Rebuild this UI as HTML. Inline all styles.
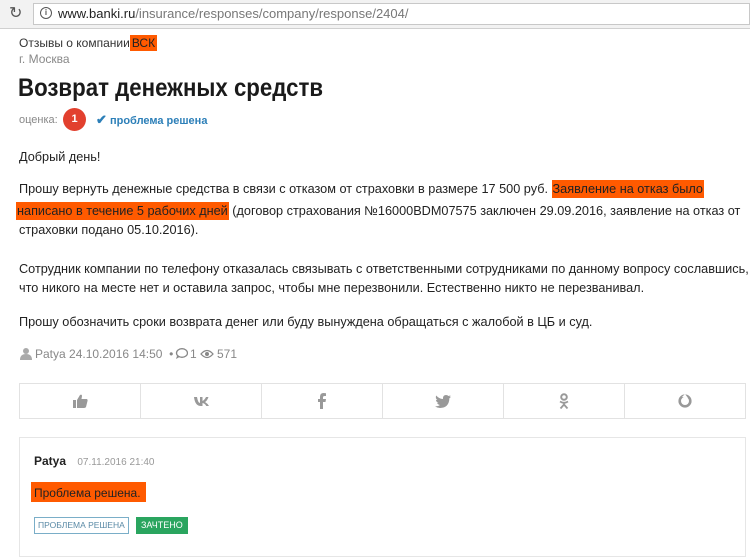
<!DOCTYPE html>
<html><head><meta charset="utf-8"><style>
*{margin:0;padding:0;box-sizing:border-box}
body{width:750px;height:549px;overflow:hidden;background:#fff;font-family:"Liberation Sans",sans-serif;color:#222;position:relative}
.a{position:absolute;white-space:nowrap}
.hl{background:#ff5a00;color:#222}
.t{font-size:12.7px;left:19px}
.c{flex:1;border-right:1px solid #e2e2e2;display:flex;align-items:center;justify-content:center}
</style></head><body>
<div class="a" style="left:0;top:0;width:750px;height:29px;background:#f2f2f2;border-bottom:1px solid #d0d0d0"></div>
<div class="a" style="left:9px;top:3px;font-size:16px;color:#555">&#x21bb;</div>
<div class="a" style="left:33px;top:3px;width:717px;height:22px;background:#fff;border:1px solid #c8c8c8"></div>
<div class="a" style="left:40px;top:7px;width:12px;height:12px;border:1.5px solid #555;border-radius:50%;font-size:8px;text-align:center;line-height:10px;color:#555;font-weight:bold">i</div>
<div class="a" style="left:58px;top:6px;font-size:13px;color:#222">www.banki.ru<span style="color:#777">/insurance/responses/company/response/2404/</span></div>

<div class="a" style="left:19px;top:36px;font-size:12px;color:#333">Отзывы о компании<span class="hl" style="padding:1px 2px">ВСК</span></div>
<div class="a" style="left:19px;top:52px;font-size:12px;color:#888">г. Москва</div>
<div class="a" style="left:18px;top:74px;font-size:25px;font-weight:bold;color:#1a1a1a;transform:scaleX(0.89);transform-origin:0 0">Возврат денежных средств</div>
<div class="a" style="left:19px;top:114px;font-size:11px;color:#888">оценка:</div>
<div class="a" style="left:63px;top:108px;width:23px;height:23px;border-radius:50%;background:#e2402e;color:#fff;font-size:11px;font-weight:bold;text-align:center;line-height:23px">1</div>
<div class="a" style="left:96px;top:112px;font-size:11px;font-weight:bold;color:#2c7fb8"><span style="font-size:13px">&#x2714;</span> проблема решена</div>

<div class="a t" style="top:150px">Добрый день!</div>
<div class="a t" style="top:182px">Прошу вернуть денежные средства в связи с отказом от страховки в размере 17 500 руб. <span class="hl" style="padding:2px 1px">Заявление на отказ было</span></div>
<div class="a t" style="top:204px"><span class="hl" style="padding:2px 1px;margin-left:-3px">написано в течение 5 рабочих дней</span> (договор страхования №16000BDM07575 заключен 29.09.2016, заявление на отказ от</div>
<div class="a t" style="top:223px">страховки подано 05.10.2016).</div>
<div class="a t" style="top:262px">Сотрудник компании по телефону отказалась связывать с ответственными сотрудниками по данному вопросу сославшись,</div>
<div class="a t" style="top:281px">что никого на месте нет и оставила запрос, чтобы мне перезвонили. Естественно никто не перезванивал.</div>
<div class="a t" style="top:315px">Прошу обозначить сроки возврата денег или буду вынуждена обращаться с жалобой в ЦБ и суд.</div>

<svg class="a" style="left:20px;top:347px" width="12" height="13" viewBox="0 0 12 13"><circle cx="6" cy="4" r="3" fill="#aaa"/><path d="M0 13 Q0 7 6 7 Q12 7 12 13Z" fill="#aaa"/></svg>
<div class="a" style="left:35px;top:347px;font-size:12px;color:#888">Patya 24.10.2016 14:50 &nbsp;•&nbsp;</div>
<svg class="a" style="left:175px;top:348px" width="13" height="12" viewBox="0 0 13 12"><ellipse cx="7" cy="5" rx="5.5" ry="4.3" fill="none" stroke="#888" stroke-width="1.3"/><path d="M2 8 L1 11 L4.5 9" fill="#888"/></svg>
<div class="a" style="left:190px;top:347px;font-size:12px;color:#888">1</div>
<svg class="a" style="left:200px;top:349px" width="14" height="10" viewBox="0 0 14 10"><path d="M1 5 Q7 -2 13 5 Q7 12 1 5Z" fill="none" stroke="#888" stroke-width="1.3"/><circle cx="7" cy="5" r="2" fill="#888"/></svg>
<div class="a" style="left:217px;top:347px;font-size:12px;color:#888">571</div>

<div class="a" style="left:19px;top:383px;width:727px;height:36px;border:1px solid #e2e2e2;display:flex">
<div class="c"><svg width="15" height="14" viewBox="0 0 15 14"><rect x="0" y="6" width="3" height="8" fill="#999"/><path d="M4 6 L7 1 Q9 0 9 2 L8.5 5 L14 5 Q15 6 14.5 7 L13 13 Q12.5 14 11 14 L4 14Z" fill="#999"/></svg></div>
<div class="c"><svg width="15" height="10" viewBox="0 0 15 10"><path d="M0 1 H3 Q4 7 6 7 V1 H8.5 V5 Q10.5 4 12 1 H14.5 Q13 5 11 6 Q13.5 7.5 15 10 H12.3 Q11 7.5 8.5 7 V10 H7 Q1 10 0 1Z" fill="#999"/></svg></div>
<div class="c"><svg width="8" height="16" viewBox="0 0 8 16"><path d="M5 16 V9 H7.5 L8 6 H5 V4.5 Q5 3 6.5 3 H8 V0.2 Q7 0 5.5 0 Q2 0 2 3.8 V6 H0 V9 H2 V16Z" fill="#999"/></svg></div>
<div class="c"><svg width="16" height="13" viewBox="0 0 16 13"><path d="M16 1.5 Q15 2 14.2 2 Q15.2 1.3 15.5 0.2 Q14.5 0.8 13.5 1 Q12.5 0 11 0 Q8 0 8 3.3 L8 4 Q4 3.8 1.2 0.5 Q0 3 2.3 5 Q1.5 5 1 4.7 Q1 7 3.4 7.7 Q2.7 8 2 7.8 Q2.8 9.8 5 10 Q3 11.6 0 11.4 Q2.3 13 5 13 Q14 13 14.4 3.3 Q15.5 2.5 16 1.5Z" fill="#999"/></svg></div>
<div class="c"><svg width="10" height="16" viewBox="0 0 10 16"><circle cx="5" cy="4" r="2.8" fill="none" stroke="#999" stroke-width="2"/><path d="M1 8.5 Q5 11 9 8.5 M5 10 V11 M1.5 15.5 L5 11.5 L8.5 15.5" fill="none" stroke="#999" stroke-width="1.8"/></svg></div>
<div class="c" style="border-right:0"><svg width="14" height="14" viewBox="0 0 14 14"><circle cx="7" cy="7" r="5.3" fill="none" stroke="#999" stroke-width="2.6"/><path d="M7 0 L10 4 L4 3Z" fill="#fff"/></svg></div>
</div>

<div class="a" style="left:19px;top:437px;width:727px;height:120px;border:1px solid #e6e6e6"></div>
<div class="a" style="left:34px;top:454px;font-size:12px;font-weight:bold;color:#222">Patya <span style="font-weight:normal;color:#999;font-size:10px;margin-left:8px">07.11.2016 21:40</span></div>
<div class="a" style="left:31px;top:482px;width:115px;height:20px;background:#ff5a00"></div>
<div class="a" style="left:34px;top:486px;font-size:12px;color:#222">Проблема решена.</div>
<div class="a" style="left:34px;top:517px;height:17px;border:1px solid #7aaec8;color:#5a8aa6;font-size:8.5px;line-height:15px;padding:0 3px;letter-spacing:0">ПРОБЛЕМА РЕШЕНА</div>
<div class="a" style="left:136px;top:517px;height:17px;background:#2aa55f;color:#fff;font-size:9px;line-height:17px;padding:0 5px">ЗАЧТЕНО</div>
</body></html>
